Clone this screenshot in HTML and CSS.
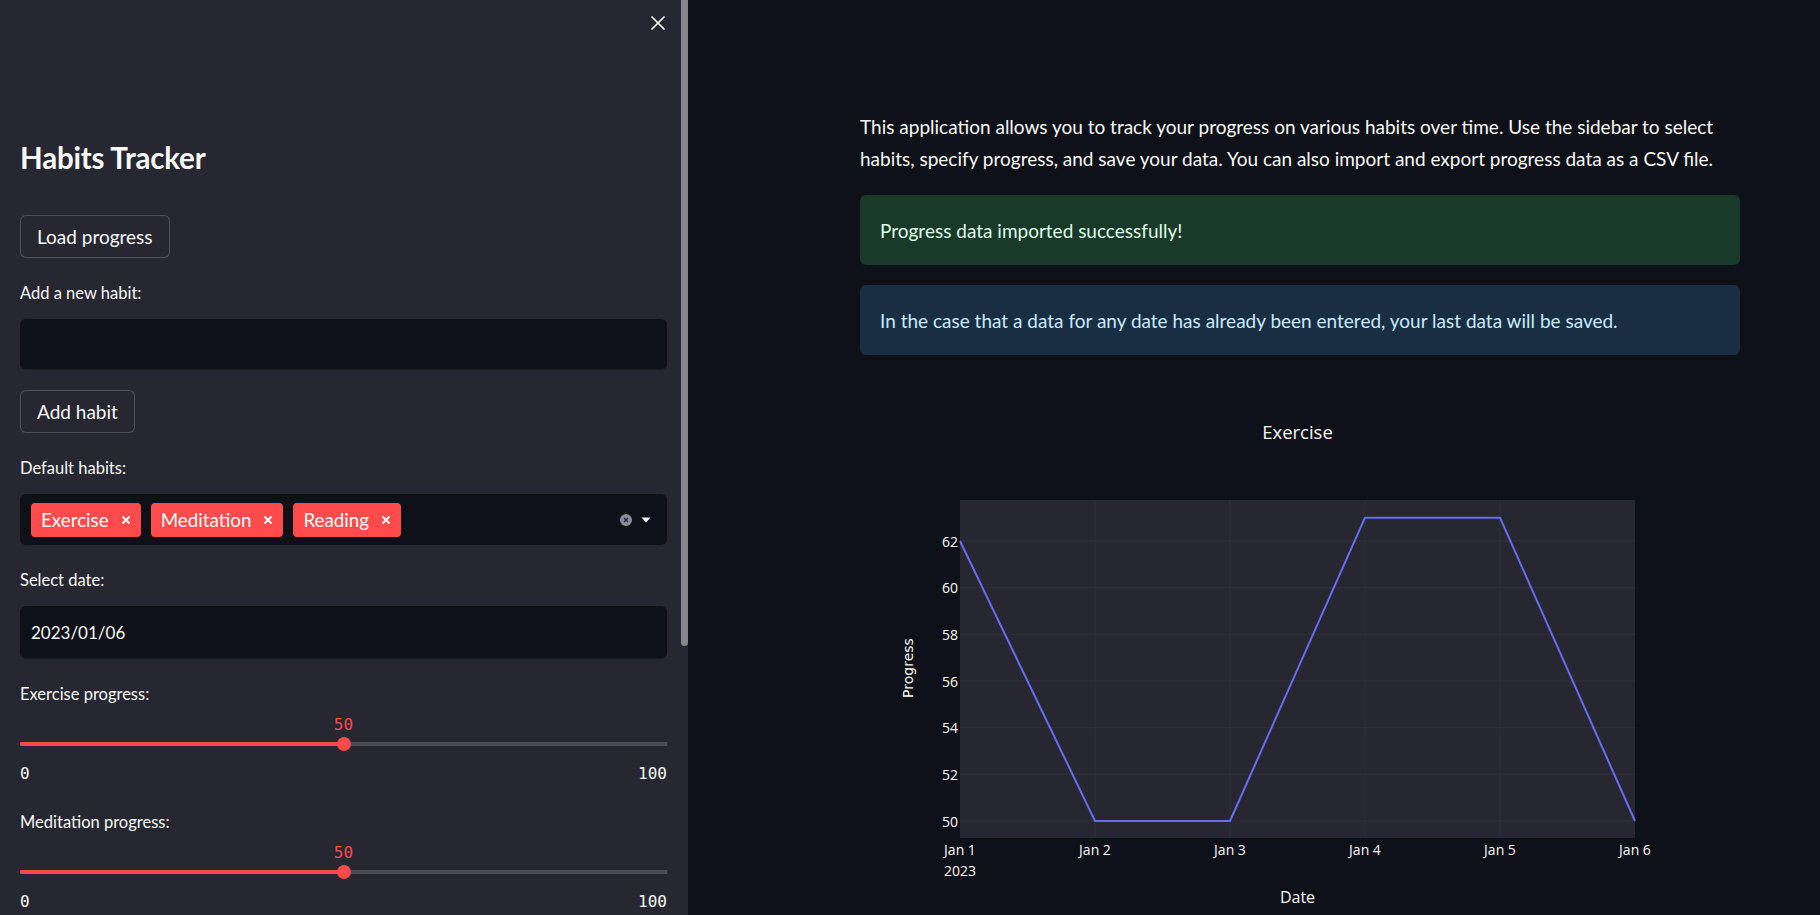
FILE: index.html
```html
<!DOCTYPE html>
<html lang="en">
<head>
<meta charset="utf-8">
<title>Habits Tracker</title>
<link rel="stylesheet" href="styles.css">
</head>
<body>
<div class="app">
  <aside class="sidebar">
    <div class="sidebar-content">
      <div class="sidebar-header">
        <button class="close-btn" aria-label="Close">
          <svg width="14" height="14" viewBox="0 0 14 14"><path d="M1 1 L13 13 M13 1 L1 13" stroke="#fafafa" stroke-width="1.7" stroke-linecap="round" fill="none"/></svg>
        </button>
      </div>
      <h1 class="title">Habits Tracker</h1>
      <div class="stack">
        <button class="btn">Load progress</button>
        <div class="field">
          <label class="label">Add a new habit:</label>
          <div class="input text-input"></div>
        </div>
        <button class="btn">Add habit</button>
        <div class="field">
          <label class="label">Default habits:</label>
          <div class="multiselect">
            <div class="tags">
              <span class="tag">Exercise<svg class="tag-x" width="10" height="10" viewBox="0 0 10 10"><path d="M1.5 1.5 L8.5 8.5 M8.5 1.5 L1.5 8.5" stroke="#fff" stroke-width="1.9" fill="none"/></svg></span>
              <span class="tag">Meditation<svg class="tag-x" width="10" height="10" viewBox="0 0 10 10"><path d="M1.5 1.5 L8.5 8.5 M8.5 1.5 L1.5 8.5" stroke="#fff" stroke-width="1.9" fill="none"/></svg></span>
              <span class="tag">Reading<svg class="tag-x" width="10" height="10" viewBox="0 0 10 10"><path d="M1.5 1.5 L8.5 8.5 M8.5 1.5 L1.5 8.5" stroke="#fff" stroke-width="1.9" fill="none"/></svg></span>
            </div>
            <div class="ms-icons">
              <svg width="12" height="12" viewBox="0 0 12 12"><circle cx="6" cy="6" r="6" fill="#8b8d98"/><path d="M4 4 L8 8 M8 4 L4 8" stroke="#262730" stroke-width="1.4" fill="none"/></svg>
              <svg width="10" height="6" viewBox="0 0 10 6"><path d="M0.5 0.5 L9.5 0.5 L5 5.5 Z" fill="#fafafa"/></svg>
            </div>
          </div>
        </div>
        <div class="field">
          <label class="label">Select date:</label>
          <div class="input date-input">2023/01/06</div>
        </div>
        <div class="field slider-field">
          <label class="label">Exercise progress:</label>
          <div class="slider" style="--v:50%">
            <div class="slider-value-row"><span class="slider-value">50</span></div>
            <div class="track"><div class="track-fill"></div><div class="thumb"></div></div>
            <div class="slider-minmax"><span>0</span><span>100</span></div>
          </div>
        </div>
        <div class="field slider-field">
          <label class="label">Meditation progress:</label>
          <div class="slider" style="--v:50%">
            <div class="slider-value-row"><span class="slider-value">50</span></div>
            <div class="track"><div class="track-fill"></div><div class="thumb"></div></div>
            <div class="slider-minmax"><span>0</span><span>100</span></div>
          </div>
        </div>
        <div class="field slider-field">
          <label class="label">Reading progress:</label>
          <div class="slider" style="--v:50%">
            <div class="slider-value-row"><span class="slider-value">50</span></div>
            <div class="track"><div class="track-fill"></div><div class="thumb"></div></div>
            <div class="slider-minmax"><span>0</span><span>100</span></div>
          </div>
        </div>
        <button class="btn">Save progress</button>
      </div>
    </div>
    <div class="scrollbar"><div class="scroll-thumb"></div></div>
  </aside>

  <main class="main">
    <div class="block">
      <p class="intro">This application allows you to track your progress on various habits over time. Use the sidebar to select habits, specify progress, and save your data. You can also import and export progress data as a CSV file.</p>
      <div class="alert success">Progress data imported successfully!</div>
      <div class="alert info">In the case that a data for any date has already been entered, your last data will be saved.</div>
      <div class="chart">
        <svg width="880" height="562" viewBox="0 0 880 562">
          <text class="chart-title" x="437.5" y="56" text-anchor="middle" dominant-baseline="central">Exercise</text>
          <rect x="100" y="125" width="675" height="338" fill="#262730"/>
          <g stroke="#2f303a" stroke-width="1">
            <line x1="235" y1="125" x2="235" y2="463"/>
            <line x1="370" y1="125" x2="370" y2="463"/>
            <line x1="505" y1="125" x2="505" y2="463"/>
            <line x1="640" y1="125" x2="640" y2="463"/>
            <line x1="100" y1="446" x2="775" y2="446"/>
            <line x1="100" y1="399.3" x2="775" y2="399.3"/>
            <line x1="100" y1="352.7" x2="775" y2="352.7"/>
            <line x1="100" y1="306" x2="775" y2="306"/>
            <line x1="100" y1="259.3" x2="775" y2="259.3"/>
            <line x1="100" y1="212.7" x2="775" y2="212.7"/>
            <line x1="100" y1="166" x2="775" y2="166"/>
          </g>
          <polyline points="100,166 235,446 370,446 505,142.7 640,142.7 775,446" fill="none" stroke="#636efa" stroke-width="2" stroke-linejoin="round"/>
          <g class="tick" text-anchor="end" dominant-baseline="central">
            <text x="98" y="446">50</text>
            <text x="98" y="399.3">52</text>
            <text x="98" y="352.7">54</text>
            <text x="98" y="306">56</text>
            <text x="98" y="259.3">58</text>
            <text x="98" y="212.7">60</text>
            <text x="98" y="166">62</text>
          </g>
          <g class="tick" text-anchor="middle" dominant-baseline="central">
            <text x="100" y="474">Jan 1</text>
            <text x="100" y="495">2023</text>
            <text x="235" y="474">Jan 2</text>
            <text x="370" y="474">Jan 3</text>
            <text x="505" y="474">Jan 4</text>
            <text x="640" y="474">Jan 5</text>
            <text x="775" y="474">Jan 6</text>
          </g>
          <text class="axis-title" x="437.5" y="522" text-anchor="middle" dominant-baseline="central">Date</text>
          <text class="axis-title progress" x="48" y="293" text-anchor="middle" dominant-baseline="central" transform="rotate(-90 48 293)">Progress</text>
        </svg>
      </div>
    </div>
  </main>
</div>
</body>
</html>
```

FILE: styles.css
```css
* { box-sizing: border-box; }

html, body {
  margin: 0;
  padding: 0;
  background: #0e1117;
  color: #fafafa;
  font-family: "Lato", "Open Sans", sans-serif;
}

.app {
  display: flex;
  width: 1820px;
  height: 915px;
  overflow: hidden;
}

/* ---------- Sidebar ---------- */
.sidebar {
  width: 688px;
  flex-shrink: 0;
  height: 915px;
  background: #262730;
  display: flex;
  overflow: hidden;
}

.sidebar-content {
  flex: 1;
  padding: 0 14px 0 20px;
}

.sidebar-header {
  display: flex;
  justify-content: flex-end;
  padding-top: 16px;
  height: 30px;
}

.close-btn {
  background: none;
  border: none;
  padding: 0;
  margin-right: 2px;
  width: 14px;
  height: 14px;
  display: flex;
}

.title {
  margin: 111px 0 0 0;
  font-size: 29.5px;
  line-height: 34px;
  font-weight: 700;
  letter-spacing: -0.2px;
}

.stack {
  margin-top: 40px;
  display: flex;
  flex-direction: column;
  align-items: flex-start;
  gap: 20px;
}

.btn {
  height: 43px;
  padding: 0 16px;
  background: #262730;
  border: 1px solid rgba(250, 250, 250, 0.2);
  border-radius: 6px;
  color: #fafafa;
  font-family: "Lato", sans-serif;
  font-size: 19px;
}

.field {
  width: 100%;
  display: flex;
  flex-direction: column;
}

.label {
  height: 30px;
  line-height: 30px;
  font-size: 16.5px;
  margin-bottom: 11px;
}

.input {
  width: 100%;
  background: #0e1117;
  border-radius: 6px;
  border-bottom: 1px solid #1c1d25;
}

.text-input { height: 51px; }

.date-input {
  height: 53px;
  display: flex;
  align-items: center;
  padding-left: 11px;
  font-size: 17px;
}

.multiselect {
  height: 51px;
  width: 100%;
  background: #0e1117;
  border-radius: 6px;
  display: flex;
  align-items: center;
  justify-content: space-between;
  padding: 0 16px 0 11px;
}

.tags {
  display: flex;
  gap: 10px;
}

.tag {
  height: 34px;
  display: flex;
  align-items: center;
  background: #ff4b4b;
  color: #fff;
  border-radius: 4px;
  padding: 0 10px 0 10px;
  font-size: 18.8px;
}

.tag-x { margin-left: 12px; }

.ms-icons {
  display: flex;
  align-items: center;
  gap: 9px;
}

/* slider */
.slider-field .label { margin-bottom: 0; }

.slider {
  width: 100%;
  display: flex;
  flex-direction: column;
}

.slider-value-row {
  height: 30px;
  line-height: 30px;
}

.slider-value {
  display: inline-block;
  margin-left: var(--v);
  transform: translateX(-50%);
  color: #ff4b4b;
  font-family: "DejaVu Sans Mono", monospace;
  font-size: 16px;
}

.track {
  height: 10px;
  display: flex;
  align-items: center;
  background: linear-gradient(#4a4b55, #4a4b55) no-repeat center / 100% 4px;
  border-radius: 2px;
}

.track-fill {
  width: var(--v);
  height: 4px;
  background: #ff4b4b;
  border-radius: 2px 0 0 2px;
}

.thumb {
  width: 14px;
  height: 14px;
  border-radius: 50%;
  background: #ff4b4b;
  margin-left: -7px;
}

.slider-minmax {
  margin-top: 12px;
  height: 26px;
  line-height: 26px;
  display: flex;
  justify-content: space-between;
  font-family: "DejaVu Sans Mono", monospace;
  font-size: 16px;
  color: #fafafa;
}

.scrollbar {
  width: 7px;
  flex-shrink: 0;
}

.scroll-thumb {
  height: 646px;
  background: #87868c;
  border-radius: 0 0 4px 4px;
}

/* ---------- Main ---------- */
.main {
  flex: 1;
  padding: 111px 0 0 172px;
}

.block {
  width: 880px;
  display: flex;
  flex-direction: column;
  gap: 20px;
}

.intro {
  margin: 0;
  font-size: 19px;
  line-height: 32px;
}

.alert {
  height: 70px;
  border-radius: 6px;
  padding: 0 20px;
  display: flex;
  align-items: center;
  font-size: 19px;
}

.success {
  background: #193a28;
  color: #dffde9;
}

.info {
  background: #192d43;
  color: #c7ebff;
}

.chart svg { display: block; }

.chart-title {
  font-family: "Open Sans", sans-serif;
  font-size: 18.5px;
  fill: #fafafa;
}

.tick text {
  font-family: "Open Sans", sans-serif;
  font-size: 14px;
  fill: #fafafa;
}

.axis-title {
  font-family: "Open Sans", sans-serif;
  font-size: 16px;
  fill: #fafafa;
}

.axis-title.progress {
  font-family: "DejaVu Sans", sans-serif;
  font-size: 14px;
}
```
